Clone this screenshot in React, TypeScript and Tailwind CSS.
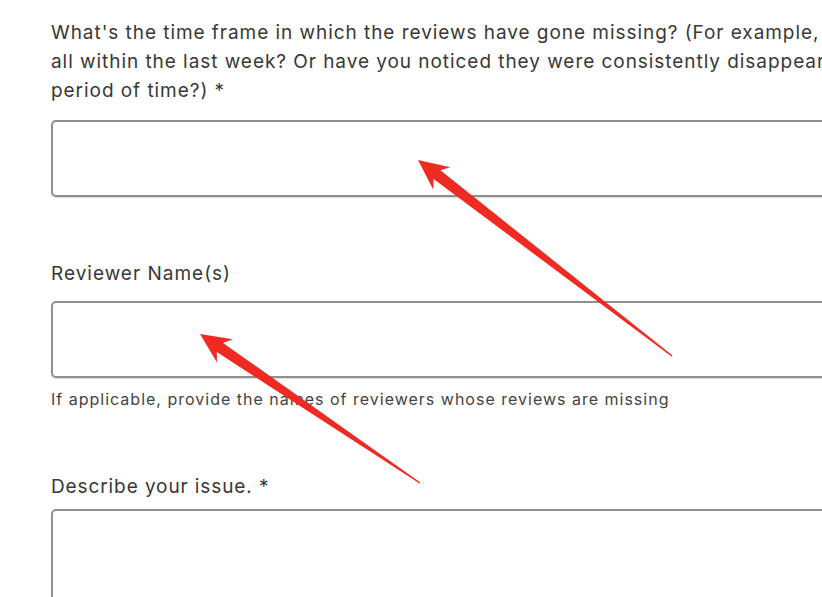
import React from "react";

type Pt = [number, number];

// tapered red annotation arrow, tip first
function arrowPoints(tip: Pt, tail: Pt, headLen: number, headW: number, shaftW: number, tailW: number) {
  const dx = tip[0] - tail[0];
  const dy = tip[1] - tail[1];
  const len = Math.hypot(dx, dy);
  const ux = dx / len;
  const uy = dy / len;
  const nx = -uy;
  const ny = ux;
  const bx = tip[0] - ux * headLen;
  const by = tip[1] - uy * headLen;
  const nbx = tip[0] - ux * headLen * 0.8;
  const nby = tip[1] - uy * headLen * 0.8;
  const pts: Pt[] = [
    [tail[0] + (nx * tailW) / 2, tail[1] + (ny * tailW) / 2],
    [nbx + (nx * shaftW) / 2, nby + (ny * shaftW) / 2],
    [bx + (nx * headW) / 2, by + (ny * headW) / 2],
    tip,
    [bx - (nx * headW) / 2, by - (ny * headW) / 2],
    [nbx - (nx * shaftW) / 2, nby - (ny * shaftW) / 2],
    [tail[0] - (nx * tailW) / 2, tail[1] - (ny * tailW) / 2],
  ];
  return pts.map((p) => `${p[0].toFixed(1)},${p[1].toFixed(1)}`).join(" ");
}

function Field({ tall }: { tall?: boolean }) {
  return (
    <div
      className={`w-[900px] rounded-[5px] border-2 border-[#8f8f8f] bg-white shadow-[0_1px_1px_rgba(0,0,0,0.15)] ${
        tall ? "h-[140px]" : "h-[77px]"
      }`}
    />
  );
}

export default function App() {
  return (
    <div
      className="relative h-[597px] w-[822px] overflow-hidden bg-white text-[#383838]"
      style={{ fontFamily: 'Inter, "Liberation Sans", sans-serif' }}
    >
      <div className="pl-[51px] pt-[18px]">
        <p className="whitespace-nowrap text-[19px] leading-[29px] tracking-[0.95px]">
          What's the time frame in which the reviews have gone missing? (For example, did they go missing
          <br />
          all within the last week? Or have you noticed they were consistently disappearing over a longer
          <br />
          period of time?) *
        </p>
        <div className="mt-[15px]">
          <Field />
        </div>

        <p className="mt-[62px] text-[19px] leading-[29px] tracking-[1px]">Reviewer Name(s)</p>
        <div className="mt-[13px]">
          <Field />
        </div>
        <p className="mt-[10px] text-[16px] leading-[22px] tracking-[1px] text-[#444]">
          If applicable, provide the names of reviewers whose reviews are missing
        </p>

        <p className="mt-[62px] text-[19px] leading-[29px] tracking-[0.9px]">Describe your issue. *</p>
        <div className="mt-[8px]">
          <Field tall />
        </div>
      </div>

      <svg className="pointer-events-none absolute inset-0" width="822" height="597" viewBox="0 0 822 597">
        <polygon points={arrowPoints([418, 160], [672, 356], 30, 28, 11, 1.5)} fill="#ee2a22" />
        <polygon points={arrowPoints([200, 334], [420, 483], 30, 28, 11, 1.5)} fill="#ee2a22" />
      </svg>
    </div>
  );
}
